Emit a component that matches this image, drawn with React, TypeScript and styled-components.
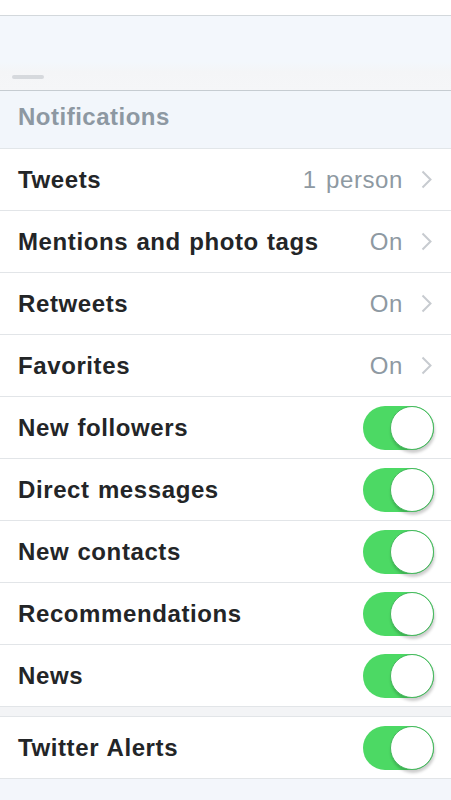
import React from 'react';
import styled, { createGlobalStyle } from 'styled-components';

const GlobalStyle = createGlobalStyle`
  html, body {
    margin: 0;
    padding: 0;
    background: #f3f6fb;
  }
  body {
    font-family: "Liberation Sans", Arial, sans-serif;
    -webkit-font-smoothing: antialiased;
  }
`;

const Screen = styled.div`
  width: 451px;
  height: 800px;
  overflow: hidden;
  background: #f3f6fb;
  display: flex;
  flex-direction: column;
`;

const StatusStrip = styled.div`
  height: 15px;
  background: #ffffff;
  border-bottom: 1px solid #d3d8dc;
  flex: none;
`;

const Toolbar = styled.div`
  height: 75px;
  flex: none;
  display: flex;
  flex-direction: column;
  justify-content: flex-end;
  padding: 0 0 11px 12px;
  box-sizing: border-box;
  background: linear-gradient(#f3f7fc 0px, #f3f7fc 46px, #f4f5f7 56px, #f5f6f8 74px);
  border-bottom: 1px solid #c6ccd1;
`;

const Handle = styled.div`
  width: 32px;
  height: 4px;
  border-radius: 2px;
  background: #d6d9dd;
`;

const SectionHeader = styled.div`
  height: 58px;
  flex: none;
  display: flex;
  align-items: center;
  padding: 0 18px 5px;
  box-sizing: border-box;
  background: #f2f6fb;
  border-bottom: 1px solid #e2e6e9;
  font-size: 24px;
  font-weight: 700;
  letter-spacing: 0.5px;
  color: #8d98a2;
`;

const Group = styled.div<{ $top?: boolean }>`
  background: #ffffff;
  flex: none;
  border-top: ${(p) => (p.$top ? '1px solid #e2e5e8' : 'none')};
`;

const Row = styled.div`
  height: 61px;
  display: flex;
  align-items: center;
  padding: 0 18px;
  border-bottom: 1px solid #e2e5e8;
`;

const Label = styled.div`
  flex: 1;
  font-size: 24px;
  font-weight: 700;
  letter-spacing: 0.6px;
  word-spacing: 1px;
  color: #232527;
  white-space: nowrap;
`;

const Value = styled.div`
  font-size: 24px;
  letter-spacing: 0.6px;
  word-spacing: 2px;
  color: #8e99a2;
  margin-right: 18px;
  white-space: nowrap;
`;

const Chevron = styled.svg`
  width: 11px;
  height: 19px;
  flex: none;
  margin-right: 1px;
`;

const Switch = styled.div`
  width: 71px;
  height: 44px;
  border-radius: 22px;
  background: #4cd964;
  position: relative;
  flex: none;
  margin-right: -1px;
`;

const Knob = styled.div`
  position: absolute;
  right: 0;
  top: 0;
  width: 44px;
  height: 44px;
  box-sizing: border-box;
  border-radius: 50%;
  background: #ffffff;
  border: 1.5px solid #45b85d;
  box-shadow: 1px 3px 3px rgba(0, 0, 0, 0.2);
`;

const Spacer = styled.div`
  height: 9px;
  flex: none;
  background: #f3f4f6;
`;

const Fill = styled.div`
  flex: 1;
  background: #f3f6fb;
`;

const ChevronIcon = () => (
  <Chevron viewBox="0 0 11 19">
    <path d="M1.5 1.5 L9.5 9.5 L1.5 17.5" fill="none" stroke="#c7cbd0" strokeWidth="2" />
  </Chevron>
);

const Toggle = () => (
  <Switch>
    <Knob />
  </Switch>
);

const detailRows = [
  { label: 'Tweets', value: '1 person' },
  { label: 'Mentions and photo tags', value: 'On' },
  { label: 'Retweets', value: 'On' },
  { label: 'Favorites', value: 'On' },
];

const toggleRows = ['New followers', 'Direct messages', 'New contacts', 'Recommendations', 'News'];

export default function App() {
  return (
    <>
      <GlobalStyle />
      <Screen>
        <StatusStrip />
        <Toolbar>
          <Handle />
        </Toolbar>
        <SectionHeader>Notifications</SectionHeader>
        <Group>
          {detailRows.map((r) => (
            <Row key={r.label}>
              <Label>{r.label}</Label>
              <Value>{r.value}</Value>
              <ChevronIcon />
            </Row>
          ))}
          {toggleRows.map((label) => (
            <Row key={label}>
              <Label>{label}</Label>
              <Toggle />
            </Row>
          ))}
        </Group>
        <Spacer />
        <Group $top>
          <Row>
            <Label>Twitter Alerts</Label>
            <Toggle />
          </Row>
        </Group>
        <Fill />
      </Screen>
    </>
  );
}
